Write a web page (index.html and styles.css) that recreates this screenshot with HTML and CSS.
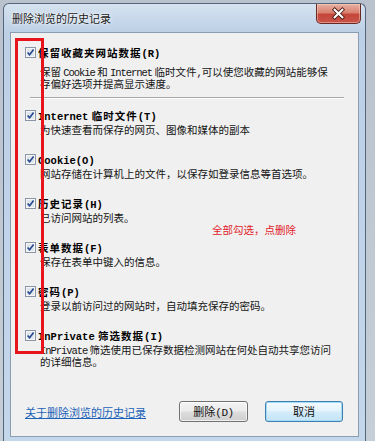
FILE: index.html
```html
<!DOCTYPE html>
<html lang="zh-CN">
<head>
<meta charset="utf-8">
<title>删除浏览的历史记录</title>
<link rel="stylesheet" href="styles.css">
</head>
<body>
<div class="window">
  <div class="titlebar">
    <span class="title">删除浏览的历史记录</span>
    <span class="close"><svg width="45" height="20" viewBox="0 0 45 20"><path d="M18.5 5.5 L26.5 13.5 M26.5 5.5 L18.5 13.5" stroke="#4a1a12" stroke-width="4" stroke-linecap="square" fill="none"/><path d="M18.5 5.5 L26.5 13.5 M26.5 5.5 L18.5 13.5" stroke="#ffffff" stroke-width="2.2" stroke-linecap="square" fill="none"/></svg></span>
  </div>
  <div class="client">
    <div class="options">
      <div class="item first">
        <span class="cb"><svg width="11" height="11" viewBox="0 0 11 11"><rect x="0.5" y="0.5" width="10" height="10" fill="#f6f6f6" stroke="#8a96a6"/><rect x="2" y="2" width="7" height="7" fill="#dfe5ec"/><path d="M2.6 5.4 L4.6 7.8 L8.6 2.6" fill="none" stroke="#24468e" stroke-width="1.6"/></svg></span>
        <div class="text">
          <div class="label">保留收藏夹网站数据<span class="lat">(R)</span></div>
          <div class="desc">保留 <span class="lat">Cookie</span> 和 <span class="lat">Internet</span> 临时文件<span class="lat">,</span>可以使您收藏的网站能够保<br>存偏好选项并提高显示速度。</div>
        </div>
      </div>
      <div class="sep"></div>
      <div class="group">
        <div class="item">
          <span class="cb"><svg width="11" height="11" viewBox="0 0 11 11"><rect x="0.5" y="0.5" width="10" height="10" fill="#f6f6f6" stroke="#8a96a6"/><rect x="2" y="2" width="7" height="7" fill="#dfe5ec"/><path d="M2.6 5.4 L4.6 7.8 L8.6 2.6" fill="none" stroke="#24468e" stroke-width="1.6"/></svg></span>
          <div class="text">
            <div class="label"><span class="lat">Internet</span> 临时文件<span class="lat">(T)</span></div>
            <div class="desc">为快速查看而保存的网页、图像和媒体的副本</div>
          </div>
        </div>
        <div class="item">
          <span class="cb"><svg width="11" height="11" viewBox="0 0 11 11"><rect x="0.5" y="0.5" width="10" height="10" fill="#f6f6f6" stroke="#8a96a6"/><rect x="2" y="2" width="7" height="7" fill="#dfe5ec"/><path d="M2.6 5.4 L4.6 7.8 L8.6 2.6" fill="none" stroke="#24468e" stroke-width="1.6"/></svg></span>
          <div class="text">
            <div class="label"><span class="lat">Cookie(O)</span></div>
            <div class="desc">网站存储在计算机上的文件，以保存如登录信息等首选项。</div>
          </div>
        </div>
        <div class="item">
          <span class="cb"><svg width="11" height="11" viewBox="0 0 11 11"><rect x="0.5" y="0.5" width="10" height="10" fill="#f6f6f6" stroke="#8a96a6"/><rect x="2" y="2" width="7" height="7" fill="#dfe5ec"/><path d="M2.6 5.4 L4.6 7.8 L8.6 2.6" fill="none" stroke="#24468e" stroke-width="1.6"/></svg></span>
          <div class="text">
            <div class="label">历史记录<span class="lat">(H)</span></div>
            <div class="desc">已访问网站的列表。</div>
          </div>
        </div>
        <div class="item">
          <span class="cb"><svg width="11" height="11" viewBox="0 0 11 11"><rect x="0.5" y="0.5" width="10" height="10" fill="#f6f6f6" stroke="#8a96a6"/><rect x="2" y="2" width="7" height="7" fill="#dfe5ec"/><path d="M2.6 5.4 L4.6 7.8 L8.6 2.6" fill="none" stroke="#24468e" stroke-width="1.6"/></svg></span>
          <div class="text">
            <div class="label">表单数据<span class="lat">(F)</span></div>
            <div class="desc">保存在表单中键入的信息。</div>
          </div>
        </div>
        <div class="item">
          <span class="cb"><svg width="11" height="11" viewBox="0 0 11 11"><rect x="0.5" y="0.5" width="10" height="10" fill="#f6f6f6" stroke="#8a96a6"/><rect x="2" y="2" width="7" height="7" fill="#dfe5ec"/><path d="M2.6 5.4 L4.6 7.8 L8.6 2.6" fill="none" stroke="#24468e" stroke-width="1.6"/></svg></span>
          <div class="text">
            <div class="label">密码<span class="lat">(P)</span></div>
            <div class="desc">登录以前访问过的网站时，自动填充保存的密码。</div>
          </div>
        </div>
        <div class="item">
          <span class="cb"><svg width="11" height="11" viewBox="0 0 11 11"><rect x="0.5" y="0.5" width="10" height="10" fill="#f6f6f6" stroke="#8a96a6"/><rect x="2" y="2" width="7" height="7" fill="#dfe5ec"/><path d="M2.6 5.4 L4.6 7.8 L8.6 2.6" fill="none" stroke="#24468e" stroke-width="1.6"/></svg></span>
          <div class="text">
            <div class="label"><span class="lat">InPrivate</span> 筛选数据<span class="lat">(I)</span></div>
            <div class="desc"><span class="lat">InPrivate</span> 筛选使用已保存数据检测网站在何处自动共享您访问<br>的详细信息。</div>
          </div>
        </div>
      </div>
    </div>
    <div class="footer">
      <a class="link" href="#">关于删除浏览的历史记录</a>
      <span class="btn">删除<span class="lat">(D)</span></span>
      <span class="btn default">取消</span>
    </div>
    <div class="mark"></div>
    <div class="note">全部勾选，点删除</div>
  </div>
</div>
</body>
</html>
```

FILE: styles.css
```css
* { box-sizing: border-box; }
html, body { margin: 0; padding: 0; }
body {
  width: 375px;
  height: 441px;
  overflow: hidden;
  background: linear-gradient(180deg, #b9c2cd 0, #c6ced7 100%);
  font-family: "Noto Sans CJK SC", sans-serif;
  color: #111;
}
.window {
  margin: 3px 0 0 3px;
  width: 363px;
  height: 438px;
  border: 1px solid #55667b;
  border-bottom: 0;
  border-radius: 6px 6px 0 0;
  padding: 0 6px 4px;
  background: linear-gradient(180deg, #d6e2ef 0, #bcd0e6 28px, #c4d6ea 100%);
  display: flex;
  flex-direction: column;
}
.titlebar {
  height: 28px;
  display: flex;
  justify-content: space-between;
  align-items: flex-start;
  flex: none;
}
.title {
  align-self: center;
  padding-left: 2px;
  font-size: 11px;
  line-height: 14px;
  color: #1a1a1a;
  text-shadow: 0 0 5px rgba(255,255,255,0.95), 0 0 2px rgba(255,255,255,0.9);
}
.close {
  width: 45px;
  height: 20px;
  margin-right: -2px;
  border: 1px solid #6a2a22;
  border-top: 0;
  border-radius: 0 0 5px 5px;
  background: linear-gradient(180deg, #e8b1a4 0, #d9816f 45%, #c5463a 55%, #c9544a 100%);
  box-shadow: inset 0 0 0 1px rgba(255,220,210,0.45);
  display: flex;
}
.close svg { display: block; }
.client {
  position: relative;
  height: 405px;
  border: 1px solid #8a9db2;
  background: #f0f0f0;
  padding: 13px 14px 14px;
  display: flex;
  flex-direction: column;
}
.options { display: flex; flex-direction: column; }
.group { display: flex; flex-direction: column; gap: 18px; }
.item { display: flex; gap: 2px; }
.cb { width: 11px; height: 11px; margin-top: 1px; flex: none; }
.cb svg { display: block; }
.label {
  font-size: 10.5px;
  font-weight: 700;
  line-height: 13px;
  letter-spacing: 1px;
  white-space: nowrap;
  color: #000;
}
.label .lat { letter-spacing: 0; }
.desc {
  font-size: 10.5px;
  line-height: 11px;
  margin-top: 2px;
  padding-left: 2px;
  white-space: nowrap;
  color: #151515;
}
.first .desc { margin-top: 7px; }
.lat {
  display: inline-block;
  line-height: 9px;
  font-family: "Liberation Mono", monospace;
  letter-spacing: -1.05px;
}
.sep {
  margin: 8px 0 10px 5px;
  height: 2px;
  border-top: 1px solid #a9a9a9;
  border-bottom: 1px solid #ffffff;
}
.footer {
  margin-top: auto;
  display: flex;
  align-items: center;
}
.link {
  margin-right: auto;
  font-size: 11px;
  line-height: 14px;
  color: #1b63b8;
  text-decoration: underline;
}
.btn {
  width: 69px;
  height: 21px;
  border: 1px solid #707070;
  border-radius: 3px;
  background: linear-gradient(180deg, #f3f3f3 0, #ebebeb 48%, #dddddd 52%, #cfcfcf 100%);
  box-shadow: inset 0 0 0 1px rgba(255,255,255,0.7);
  font-size: 11px;
  line-height: 19px;
  text-align: center;
  color: #111;
}
.btn .lat { letter-spacing: -0.5px; }
.btn.default {
  width: 78px;
  margin-left: 17px;
  margin-right: 1px;
  border-color: #3c7fb1;
  background: linear-gradient(180deg, #f2fafe 0, #e4f3fc 48%, #d3ecfa 52%, #c4e4f7 100%);
  box-shadow: inset 0 0 0 1px #a8dcf6;
}
.mark {
  position: absolute;
  left: 4px;
  top: 5px;
  width: 29px;
  height: 316px;
  border: 3px solid #e8141c;
}
.note {
  position: absolute;
  left: 201px;
  top: 190px;
  font-size: 10.5px;
  line-height: 14px;
  color: #e3202a;
  white-space: nowrap;
}
```
